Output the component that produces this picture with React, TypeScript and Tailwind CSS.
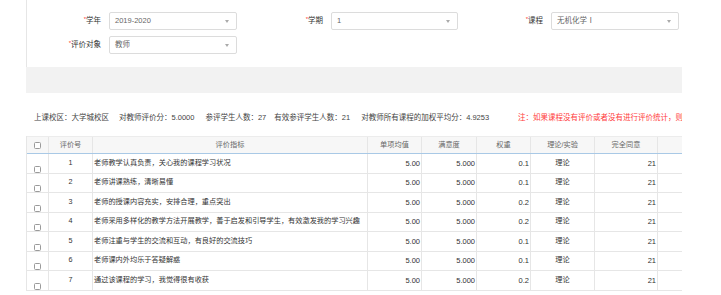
const font = { fontFamily: '"Liberation Sans", "Noto Sans CJK SC", sans-serif' };

type Row = {
  no: number;
  text: string;
  avg: string;
  sat: string;
  weight: string;
  kind: string;
  agree: string;
};

const rows: Row[] = [
  { no: 1, text: "老师教学认真负责，关心我的课程学习状况", avg: "5.00", sat: "5.000", weight: "0.1", kind: "理论", agree: "21" },
  { no: 2, text: "老师讲课熟练，清晰易懂", avg: "5.00", sat: "5.000", weight: "0.1", kind: "理论", agree: "21" },
  { no: 3, text: "老师的授课内容充实，安排合理，重点突出", avg: "5.00", sat: "5.000", weight: "0.2", kind: "理论", agree: "21" },
  { no: 4, text: "老师采用多样化的教学方法开展教学，善于启发和引导学生，有效激发我的学习兴趣", avg: "5.00", sat: "5.000", weight: "0.2", kind: "理论", agree: "21" },
  { no: 5, text: "老师注重与学生的交流和互动，有良好的交流技巧", avg: "5.00", sat: "5.000", weight: "0.1", kind: "理论", agree: "21" },
  { no: 6, text: "老师课内外均乐于答疑解惑", avg: "5.00", sat: "5.000", weight: "0.1", kind: "理论", agree: "21" },
  { no: 7, text: "通过该课程的学习，我觉得很有收获", avg: "5.00", sat: "5.000", weight: "0.2", kind: "理论", agree: "21" },
];

function Label({ text, width }: { text: string; width: string }) {
  return (
    <div className={`${width} shrink-0 text-right text-[7.5px] text-[#333] pr-[8px]`}>
      <span className="text-[#f33] text-[6px] align-top">*</span>
      {text}
    </div>
  );
}

function Select({ value, width }: { value: string; width: string }) {
  return (
    <div className={`${width} h-[18px] shrink-0 flex items-center justify-between border border-[#dcdcdc] rounded-[2px] bg-white pl-[5px] pr-[7px]`}>
      <span className="text-[7.5px] text-[#666]">{value}</span>
      <span className="w-0 h-0 border-l-[2px] border-r-[2px] border-t-[3px] border-l-transparent border-r-transparent border-t-[#aaa]" />
    </div>
  );
}

function Checkbox() {
  return <span className="block w-[7px] h-[7px] border border-[#9a9a9a] rounded-[1.5px] bg-white" />;
}

const cell = "border-r border-[#e6e6e6] shrink-0";

export default function App() {
  return (
    <div className="w-[721px] h-[295px] bg-white overflow-hidden" style={font}>
      <div className="ml-[26px] w-[656px] overflow-hidden">
        <div className="border-l border-[#e6e6e6] pt-[12px] pb-[13px]">
          <div className="flex items-center">
            <Label text="学年" width="w-[82px]" />
            <Select value="2019-2020" width="w-[128px]" />
            <Label text="学期" width="w-[94px]" />
            <Select value="1" width="w-[127px]" />
            <Label text="课程" width="w-[93px]" />
            <Select value="无机化学Ⅰ" width="w-[128px]" />
          </div>
          <div className="flex items-center mt-[6px]">
            <Label text="评价对象" width="w-[82px]" />
            <Select value="教师" width="w-[128px]" />
          </div>
        </div>

        <div className="h-[26px] bg-[#f2f2f2]" />

        <div className="mt-[19px] h-[12px] pl-[8px] flex items-center whitespace-nowrap overflow-hidden text-[7.5px] text-[#444]">
          <span className="mr-[10px] shrink-0">上课校区：大学城校区</span>
          <span className="mr-[11px] shrink-0">对教师评价分：5.0000</span>
          <span className="mr-[8px] shrink-0">参评学生人数：27</span>
          <span className="mr-[11px] shrink-0">有效参评学生人数：21</span>
          <span className="mr-[29px] shrink-0">对教师所有课程的加权平均分：4.9253</span>
          <span className="shrink-0 text-[#ff3b3b]">注：如果课程没有评价或者没有进行评价统计，则</span>
        </div>

        <div className="mt-[12px] border-l border-[#e6e6e6] text-[7.2px] w-[700px]">
          <div className="flex h-[18px] bg-[#f7f7f7] border-t border-[#ececec] border-b border-b-[#a9c9e6] text-[#666]">
            <div className={`${cell} w-[22px] flex items-center justify-center`}>
              <Checkbox />
            </div>
            <div className={`${cell} w-[44px] flex items-center justify-center`}>评价号</div>
            <div className={`${cell} w-[275px] flex items-center justify-center`}>评价指标</div>
            <div className={`${cell} w-[54px] flex items-center justify-center`}>单项均值</div>
            <div className={`${cell} w-[55px] flex items-center justify-center`}>满意度</div>
            <div className={`${cell} w-[54px] flex items-center justify-center`}>权重</div>
            <div className={`${cell} w-[64px] flex items-center justify-center`}>理论/实验</div>
            <div className={`${cell} w-[63px] flex items-center justify-center`}>完全同意</div>
            <div className={`${cell} w-[63px]`} />
          </div>
          {rows.map((r) => (
            <div key={r.no} className="flex h-[19.5px] border-b border-[#e6e6e6] text-[#333]">
              <div className={`${cell} w-[22px] flex items-end justify-center`}>
                <Checkbox />
              </div>
              <div className={`${cell} w-[44px] flex items-center justify-center`}>{r.no}</div>
              <div className={`${cell} w-[275px] flex items-center pl-[1px] whitespace-nowrap overflow-hidden`}>{r.text}</div>
              <div className={`${cell} w-[54px] flex items-center justify-end pr-[1px] text-[7.5px]`}>{r.avg}</div>
              <div className={`${cell} w-[55px] flex items-center justify-end pr-[1px] text-[7.5px]`}>{r.sat}</div>
              <div className={`${cell} w-[54px] flex items-center justify-end pr-[1px] text-[7.5px]`}>{r.weight}</div>
              <div className={`${cell} w-[64px] flex items-center justify-center`}>{r.kind}</div>
              <div className={`${cell} w-[63px] flex items-center justify-end pr-[1px] text-[7.5px]`}>{r.agree}</div>
              <div className={`${cell} w-[63px]`} />
            </div>
          ))}
        </div>
      </div>
    </div>
  );
}
